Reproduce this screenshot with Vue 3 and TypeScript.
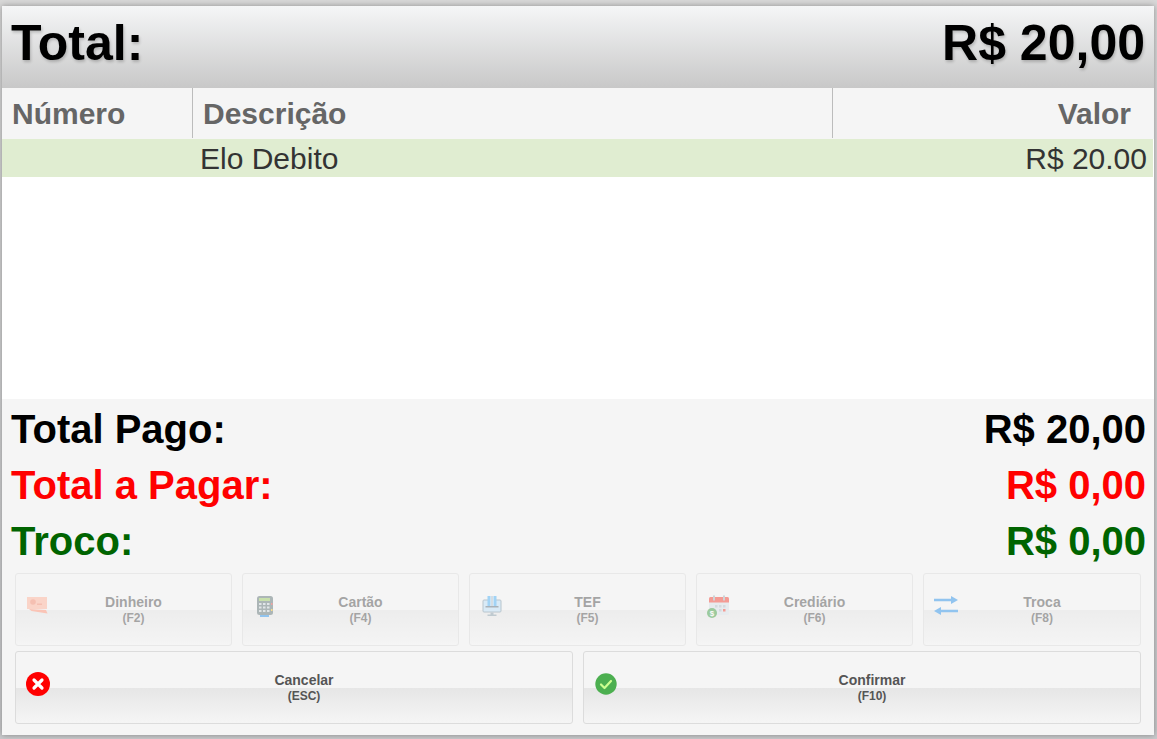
<script setup lang="ts">
const totals = [
  { label: 'Total Pago:', value: 'R$ 20,00', cls: 'black' },
  { label: 'Total a Pagar:', value: 'R$ 0,00', cls: 'red' },
  { label: 'Troco:', value: 'R$ 0,00', cls: 'green' },
]

const payments = [
  { name: 'Dinheiro', key: '(F2)', icon: 'cash' },
  { name: 'Cartão', key: '(F4)', icon: 'card' },
  { name: 'TEF', key: '(F5)', icon: 'tef' },
  { name: 'Crediário', key: '(F6)', icon: 'credit' },
  { name: 'Troca', key: '(F8)', icon: 'swap' },
]
</script>

<template>
  <div class="page">
    <div class="modal">
      <header class="head">
        <span>Total:</span>
        <span>R$ 20,00</span>
      </header>

      <div class="table">
        <div class="thead">
          <div class="th">Número</div>
          <div class="th">Descrição</div>
          <div class="th right">Valor</div>
        </div>
        <div class="row">
          <div></div>
          <div class="desc">Elo Debito</div>
          <div class="val">R$ 20.00</div>
        </div>
      </div>

      <section class="footer">
        <div v-for="t in totals" :key="t.label" class="sum" :class="t.cls">
          <span>{{ t.label }}</span>
          <span>{{ t.value }}</span>
        </div>

        <div class="btns five">
          <button v-for="p in payments" :key="p.name" class="btn off" disabled>
            <svg class="ico" viewBox="0 0 24 24">
              <g v-if="p.icon === 'cash'">
                <path d="M1 3h20v12H1z" fill="#ffb49c" />
                <circle cx="7" cy="8" r="2.800" fill="#f58a70" />
                <path d="M11 9.500h5v1.500h-5z" fill="#f58a70" />
                <path d="M3 15l17 1 1.500 3.500-16-2.500z" fill="#ff9478" />
              </g>
              <g v-else-if="p.icon === 'card'">
                <path d="M7 20h9v3H7z" fill="#2f94ea" />
                <rect x="4" y="2" width="16" height="19" rx="2.500" fill="#66787a" />
                <rect x="6" y="4" width="11" height="3" fill="#9ccc65" />
                <path d="M6 9h2.500v2H6zM10 9h2.500v2H10zM14 9h2.500v2H14zM6 12.500h2.500v2H6zM10 12.500h2.500v2H10zM14 12.500h2.500v2H14zM6 16h2.500v2H6zM10 16h2.500v2H10zM14 16h2.500v2H14z" fill="#cfd8dc" />
                <path d="M18 9h1.500v2H18z" fill="#ef5350" />
                <path d="M18 15h1.500v2H18z" fill="#ffca28" />
              </g>
              <g v-else-if="p.icon === 'tef'">
                <rect x="3" y="6" width="18" height="12" rx="1" fill="#bfe0f8" stroke="#7f98a8" />
                <path d="M7.500 2h9v10h-9z" fill="#4fb3f6" />
                <path d="M10.500 2h3v10h-3z" fill="#eef7fd" />
                <path d="M11.500 2h1v10h-1z" fill="#7f98a8" />
                <path d="M5.500 12h13v1.500h-13z" fill="#60727e" />
                <path d="M10.500 18.500h3v2h-3zM7.500 20.500h9v1.500h-9z" fill="#8ba0ad" />
              </g>
              <g v-else-if="p.icon === 'credit'">
                <rect x="2" y="3" width="20" height="18" rx="1.500" fill="#dbe2e8" />
                <path d="M2 4.500A1.500 1.500 0 0 1 3.500 3h17A1.500 1.500 0 0 1 22 4.500V8.500H2z" fill="#f44336" />
                <path d="M6 1.500h2v5H6zM16 1.500h2v5h-2z" fill="#aab4ba" />
                <path d="M8 11h2.500v2.500H8zM12 11h2.500v2.500H12zM16 11h2.500v2.500H16zM12 15h2.500v2.500H12z" fill="#b6c0c8" />
                <path d="M16 15h2.500v2.500H16z" fill="#f44336" />
                <circle cx="5" cy="19" r="5" fill="#43a047" />
                <text x="5" y="22" class="dollar">$</text>
              </g>
              <g v-else>
                <path d="M0 4.800h17V2l7 4-7 4V7.200H0z" fill="#2f94ea" />
                <path d="M24 15.800H7V13l-7 4 7 4v-2.800h17z" fill="#2f94ea" />
              </g>
            </svg>
            <span class="txt">
              <b>{{ p.name }}</b>
              <small>{{ p.key }}</small>
            </span>
          </button>
        </div>

        <div class="btns two">
          <button class="btn">
            <svg class="ico" viewBox="0 0 24 24">
              <circle cx="12" cy="12" r="12" fill="#ff0000" />
              <path d="M8 8l8 8M16 8l-8 8" stroke="#fff" stroke-width="3.200" stroke-linecap="round" />
            </svg>
            <span class="txt">
              <b>Cancelar</b>
              <small>(ESC)</small>
            </span>
          </button>
          <button class="btn">
            <svg class="ico" viewBox="0 0 24 24">
              <circle cx="12" cy="12" r="10.700" fill="#4caf50" />
              <path d="M7 12.500l3.500 3.500 6.500-7" fill="none" stroke="#ccff90" stroke-width="2.200" stroke-linecap="round" stroke-linejoin="round" />
            </svg>
            <span class="txt">
              <b>Confirmar</b>
              <small>(F10)</small>
            </span>
          </button>
        </div>
      </section>
    </div>
  </div>
</template>

<style>
html,
body {
  margin: 0;
  background: #bfc1c3;
  overflow: hidden;
}
</style>

<style scoped>
.page {
  width: 1157px;
  height: 739px;
  box-sizing: border-box;
  padding: 6px 3px 4px 2px;
  background: linear-gradient(#d8d8d8, #c9cacc);
  font-family: "Liberation Sans", Arial, sans-serif;
}

.modal {
  height: 100%;
  display: flex;
  flex-direction: column;
  background: #fff;
  box-shadow: 0 0 6px rgba(0, 0, 0, 0.35);
}

.head {
  height: 82px;
  box-sizing: border-box;
  padding: 8px 9px 0;
  display: flex;
  justify-content: space-between;
  font-size: 50px;
  line-height: 58px;
  font-weight: bold;
  color: #000;
  text-shadow: 1px 2px 3px rgba(0, 0, 0, 0.2);
  background: linear-gradient(#f5f6f7, #c8c8c8);
}

.table {
  flex: 1;
  margin-right: 1px;
}

.thead {
  display: grid;
  grid-template-columns: 191px 640px 1fr;
  height: 51px;
  background: #f5f5f5;
  margin-right: -1px;
}

.th {
  height: 50px;
  box-sizing: border-box;
  padding: 0 23px 0 10px;
  border-right: 1px solid #bcbcbc;
  font-size: 30px;
  line-height: 51px;
  font-weight: bold;
  color: #666;
}

.th.right {
  text-align: right;
  border-right: 0;
}

.row {
  display: grid;
  grid-template-columns: 191px 640px 1fr;
  height: 38px;
  background: #e0edd1;
  font-size: 30px;
  line-height: 40px;
  color: #333;
  overflow: hidden;
}

.desc {
  padding-left: 7px;
}

.val {
  padding-right: 6px;
  text-align: right;
}

.footer {
  height: 336px;
  box-sizing: border-box;
  padding: 2px 13px 0;
  background: #f5f5f5;
}

.sum {
  height: 56px;
  margin: 0 -5px 0 -4px;
  display: flex;
  justify-content: space-between;
  font-size: 40px;
  line-height: 56px;
  font-weight: bold;
}

.black {
  color: #000;
}

.red {
  color: #ff0000;
}

.green {
  color: #006400;
}

.btns {
  display: grid;
  gap: 10px;
}

.five {
  margin-top: 4px;
  grid-template-columns: repeat(4, 217px) 1fr;
}

.two {
  margin-top: 5px;
  grid-template-columns: repeat(2, 1fr);
}

.btn {
  height: 73px;
  box-sizing: border-box;
  margin: 0;
  padding: 0 14px 0 10px;
  display: flex;
  align-items: center;
  border: 1px solid #dcdcdc;
  border-radius: 3px;
  font-family: inherit;
  color: #555;
  background: linear-gradient(#f5f5f5 36px, #e6e6e6 36px, #f5f5f5);
}

.btn.off {
  opacity: 0.5;
}

.ico {
  flex: none;
  width: 24px;
  height: 24px;
  margin-bottom: 7px;
}

.dollar {
  font-size: 8px;
  font-weight: bold;
  fill: #fff;
  text-anchor: middle;
}

.txt {
  flex: 1;
  display: flex;
  flex-direction: column;
  align-items: center;
  line-height: 16px;
}

.txt b {
  font-size: 14px;
}

.txt small {
  font-size: 12px;
  font-weight: bold;
}
</style>
